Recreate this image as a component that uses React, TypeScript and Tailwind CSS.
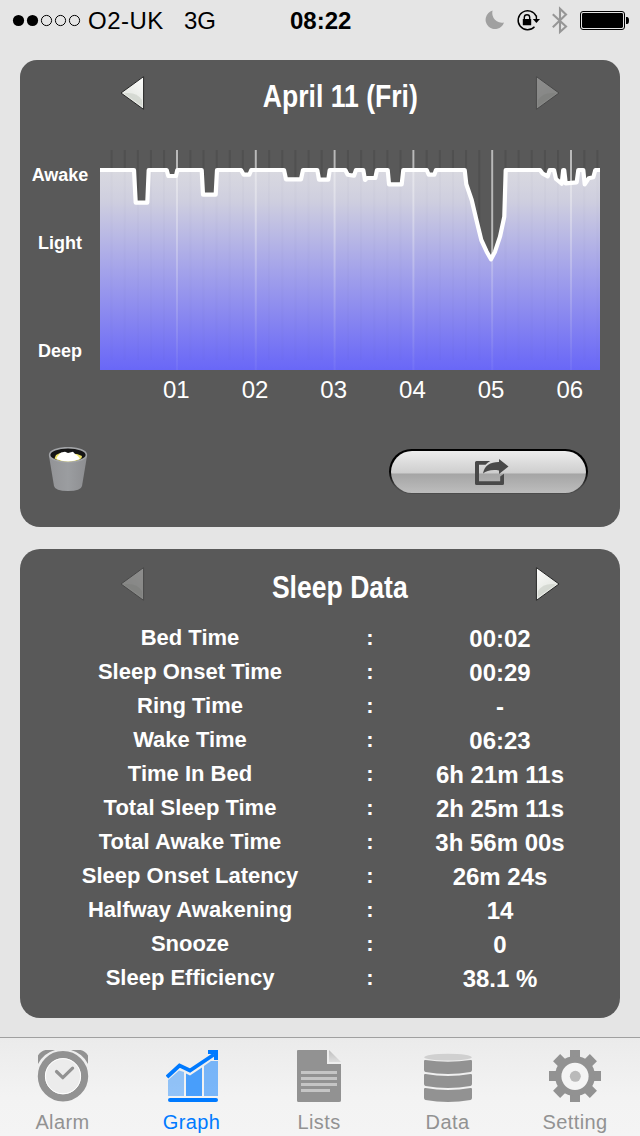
import React from "react";

const rows: [string, string][] = [
  ["Bed Time", "00:02"],
  ["Sleep Onset Time", "00:29"],
  ["Ring Time", "-"],
  ["Wake Time", "06:23"],
  ["Time In Bed", "6h 21m 11s"],
  ["Total Sleep Time", "2h 25m 11s"],
  ["Total Awake Time", "3h 56m 00s"],
  ["Sleep Onset Latency", "26m 24s"],
  ["Halfway Awakening", "14"],
  ["Snooze", "0"],
  ["Sleep Efficiency", "38.1 %"],
];

const hours = ["01", "02", "03", "04", "05", "06"];

const curve =
  "0,20 34,20 35.7,52.7 47.3,52.7 48.7,20 66.7,20 68.3,26 76,26 77.3,20 101.7,20 103,44.7 115.7,44.7 117,20 141,20 143.7,24.7 149.3,24.7 151.3,20 184,20 186,29.3 201,29.3 203,20 217.3,20 219,29.7 228.3,29.7 229.7,20 245.3,20 247.7,24.7 254,25.7 256,20 263.3,20 265,30 267,28 275.3,28 277,20 287.7,20 289,34.3 301.7,34.3 303.3,20 326.7,20 328.7,24.7 334.3,24.7 336,20 364.7,20 366.3,34.3 371.7,50 376,68.3 381.3,90 386.7,101.7 391,109.3 395,101.7 400,86.7 404.3,66.7 405.7,20 440,20 442.7,23.7 447.7,26.3 449.7,20 454,20 456,29 461.7,33.7 463.2,20 464.2,20 465.7,33.3 476.7,32.3 478.3,20 483.3,20 484.7,34.3 488.7,28.3 493.3,27.3 495.3,20 501,20";

function Arrow({ right = false, dim = false }: { right?: boolean; dim?: boolean }) {
  const id = `arrow-${right ? "r" : "l"}-${dim ? "d" : "b"}`;
  return (
    <svg width="26" height="36" viewBox="0 0 26 36" className={right ? "" : "-scale-x-100"}>
      <defs>
        <linearGradient id={id} x1="0" y1="0" x2="0.5" y2="1">
          <stop offset="0" stopColor="#fdfdfc" />
          <stop offset="1" stopColor="#dfe2dc" />
        </linearGradient>
      </defs>
      <g opacity={dim ? 0.32 : 1}>
        <path d="M1.4 1.6 L24 18 L1.4 34.4 Z" fill={`url(#${id})`} stroke="#252525" strokeWidth="1" />
        <path d="M3 25 Q8 17 19 18 L21 18.6 L3 31 Z" fill="#cbd0c8" opacity="0.65" />
      </g>
    </svg>
  );
}

function StatusBar() {
  return (
    <header className="flex h-[40px] items-center text-[24px] leading-none text-black">
      <div className="flex w-[290px] items-center pl-3">
        <svg width="70" height="14" viewBox="0 0 70 14">
          {[0, 1, 2, 3, 4].map((i) => (
            <circle key={i} cx={6.5 + i * 14} cy="7.5" r={i < 2 ? 5.6 : 5.1} fill={i < 2 ? "#000" : "none"} stroke="#000" strokeWidth={i < 2 ? 0 : 1} />
          ))}
        </svg>
        <span className="ml-[6px] w-[96px] pt-[2px] tracking-[0.5px]">O2-UK</span>
        <span className="pt-[2px]">3G</span>
      </div>
      <div className="w-[190px] pt-[2px] font-bold">08:22</div>
      <svg width="160" height="40" viewBox="480 0 160 40">
        <path d="M492.6 10.6 A9.4 9.4 0 1 0 504 22.4 A9.6 9.6 0 0 1 492.6 10.6 Z" fill="#a0a0a0" />
        <path d="M536.2 16.2 A9.5 9.5 0 1 0 534.5 26.8" fill="none" stroke="#000" strokeWidth="1.4" />
        <path d="M536.4 15.5 V20" stroke="#000" strokeWidth="1.4" />
        <path d="M532.8 19 H540 L536.4 23 Z" />
        <rect x="522.8" y="19" width="8.4" height="6.3" rx="0.6" />
        <path d="M524.3 19.5 V17.4 A2.7 2.7 0 0 1 529.7 17.4 V19.5" fill="none" stroke="#000" strokeWidth="1.4" />
        <path d="M552.8 14.2 L566 26.6 L560 32 V8.8 L566 14.6 L552.8 27.2" fill="none" stroke="#969696" strokeWidth="2.1" />
        <rect x="580.5" y="11.5" width="44" height="18" rx="2.5" fill="none" stroke="#000" />
        <rect x="582" y="13" width="41" height="15" rx="1.4" />
        <path d="M626 17 H627 Q629 17 629 20.5 Q629 24 627 24 H626 Z" />
      </svg>
    </header>
  );
}

function CardTitle({ text, leftDim = false, rightDim = false }: { text: string; leftDim?: boolean; rightDim?: boolean }) {
  return (
    <div className="flex items-center justify-between pr-[59px] pl-[99px]">
      <Arrow dim={leftDim} />
      <h2 className="scale-x-[0.83] pt-[6px] text-[32px] leading-[36px] font-bold whitespace-nowrap">{text}</h2>
      <Arrow right dim={rightDim} />
    </div>
  );
}

function SleepChart() {
  return (
    <svg width="500" height="220" viewBox="0 0 500 220" className="block">
      <defs>
        <linearGradient id="sleep" gradientUnits="userSpaceOnUse" x1="0" y1="20" x2="0" y2="220">
          <stop offset="0" stopColor="#d9d9e0" />
          <stop offset="0.15" stopColor="#cfcfdf" />
          <stop offset="0.5" stopColor="#a4a3ea" />
          <stop offset="1" stopColor="#6967f7" />
        </linearGradient>
        <linearGradient id="hour" gradientUnits="userSpaceOnUse" x1="0" y1="20" x2="0" y2="220">
          <stop offset="0" stopColor="#fff" stopOpacity="0.42" />
          <stop offset="1" stopColor="#fff" stopOpacity="0.05" />
        </linearGradient>
        <clipPath id="area">
          <polygon points={`${curve} 500,220 0,220`} />
        </clipPath>
      </defs>
      {Array.from({ length: 38 }, (_, i) => (
        <rect key={i} x={10.6 + i * 13.13} y="0" width="2" height="200" fill="#505050" />
      ))}
      {hours.map((h, i) => (
        <rect key={h} x={76 + i * 78.8} y="0" width="2" height="200" fill="#b9b9b9" />
      ))}
      <polygon points={`${curve} 500,220 0,220`} fill="url(#sleep)" />
      <g clipPath="url(#area)">
        {Array.from({ length: 38 }, (_, i) => (
          <rect key={i} x={10.6 + i * 13.13} y="20" width="2" height="190" fill="#404080" opacity="0.025" />
        ))}
        {hours.map((h, i) => (
          <rect key={h} x={76 + i * 78.8} y="20" width="2" height="200" fill="url(#hour)" />
        ))}
      </g>
      <polyline points={curve} fill="none" stroke="#fff" strokeWidth="4.2" strokeLinejoin="round" />
    </svg>
  );
}

function TrashIcon() {
  return (
    <svg width="40" height="46" viewBox="0 0 40 46">
      <defs>
        <linearGradient id="bin" x1="0" y1="0" x2="1" y2="0">
          <stop offset="0" stopColor="#929396" />
          <stop offset="0.5" stopColor="#9b9da0" />
          <stop offset="1" stopColor="#8d8e91" />
        </linearGradient>
      </defs>
      <path d="M1 9 L6 39 Q7 44 20 44 Q33 44 34 39 L39 9 Z" fill="url(#bin)" />
      <ellipse cx="20" cy="7.9" rx="18.4" ry="7.2" fill="#151515" stroke="#a2a4a7" strokeWidth="1.6" />
      <path d="M6.5 11.5 L8 8 L12 6 L29 7 L34 9 L33.5 11.2 Q29 14.4 20 14.4 Q11 14.4 6.5 11.5 Z" fill="#ede268" />
      <path d="M8.5 12 L9 10 L13 5.5 L17 4.8 L20 6 L25 4.8 L27 7 L30 9 L32 12 Q27 14.4 20 14.4 Q13 14.4 8.5 12 Z" fill="#fff" />
    </svg>
  );
}

function ShareIcon() {
  return (
    <svg width="34" height="26" viewBox="0 0 34 26" fill="#494949">
      <path d="M15.2 2 H1.5 Q0 2 0 3.5 V24.5 Q0 26 1.5 26 H27.5 Q29 26 29 24.5 V14.8 L25.2 17.5 V22.2 H4 V5.8 H10.5 Q12.5 3.5 15.2 2 Z" />
      <path d="M8 14.5 C9.5 6.5 15.5 3 24 3.1 V0 L33.5 7.5 L24 15 V11.4 C17 10.4 11.5 11.5 8 14.5 Z" />
    </svg>
  );
}

function AlarmIcon() {
  return (
    <svg width="52" height="52" viewBox="0 0 52 52" fill="none" stroke="#929292">
      <path d="M1 14 V5.5 Q3.5 1 8.5 0 H18 Q6 3.5 1 14 Z M51 14 V5.5 Q48.5 1 43.5 0 H34 Q46 3.5 51 14 Z" fill="#929292" stroke="none" />
      <circle cx="26" cy="26.2" r="21.6" strokeWidth="7.2" fill="#ececec" />
      <circle cx="26" cy="26.2" r="17.6" strokeWidth="1" stroke="#fff" />
      <path d="M19.5 21.5 L25.8 27.7 L35.6 18.2" strokeWidth="3.2" strokeLinecap="round" strokeLinejoin="round" />
    </svg>
  );
}

function GraphIcon() {
  return (
    <svg width="52" height="52" viewBox="0 0 52 52" fill="#007aff">
      <path d="M2 30 L13 20.5 L18 22 V46 H2 Z" opacity="0.4" />
      <path d="M20 23.5 L24 25.5 L36 17.5 V46 H20 Z" opacity="0.7" />
      <path d="M38 16 L45 11 H52 V46 H38 Z" opacity="0.5" />
      <path d="M1 27 L13.5 15.5 L24 20.5 L48 4.5" fill="none" stroke="#007aff" strokeWidth="3.8" />
      <path d="M42 0 H52 V10 H48 V4 H42 Z" />
      <rect x="2" y="48" width="50" height="4" rx="2" />
    </svg>
  );
}

function ListsIcon() {
  return (
    <svg width="44" height="52" viewBox="0 0 44 52">
      <defs>
        <linearGradient id="fold" x1="0" y1="0" x2="0" y2="1">
          <stop offset="0" stopColor="#bfbfbf" />
          <stop offset="1" stopColor="#dedede" />
        </linearGradient>
      </defs>
      <path d="M1 0 H30 V14 H44 V50.5 Q44 52 42 52 H1.5 Q0 52 0 50.5 V1 Q0 0 1 0 Z" fill="#929292" />
      <path d="M32 0 L44 12 H32 Z" fill="url(#fold)" />
      <path d="M4 22.5 H40 M4 28.5 H40 M4 34.5 H40 M4 40.5 H33" stroke="#c5c5c5" strokeWidth="3" />
    </svg>
  );
}

function DataIcon() {
  return (
    <svg width="48" height="52" viewBox="0 0 48 52" fill="#929292">
      <ellipse cx="24" cy="7.2" rx="23.8" ry="3.4" fill="#d0d0d0" />
      <path d="M0 11 Q0 9.8 1.5 10 Q24 13.5 46.5 10 Q48 9.8 48 11 V20 Q48 21.6 46.5 22 Q24 26 1.5 22 Q0 21.6 0 20 Z" />
      <path d="M0 25 Q0 23.8 1.5 24 Q24 28 46.5 24 Q48 23.8 48 25 V34 Q48 35.6 46.5 36 Q24 40 1.5 36 Q0 35.6 0 34 Z" />
      <path d="M0 39 Q0 37.8 1.5 38 Q24 42 46.5 38 Q48 37.8 48 39 V48 Q48 49.6 46.5 50 Q24 54 1.5 50 Q0 49.6 0 48 Z" />
    </svg>
  );
}

function GearIcon() {
  return (
    <svg width="52" height="52" viewBox="0 0 52 52" fill="#929292">
      {[0, 45, 90, 135].map((a) => (
        <rect key={a} x="21" y="0" width="10" height="52" transform={`rotate(${a} 26 26)`} />
      ))}
      <circle cx="26" cy="26" r="20" />
      <circle cx="26" cy="26.3" r="13.6" fill="#f4f4f4" />
      <circle cx="26.3" cy="26.3" r="5.5" fill="#bababa" />
    </svg>
  );
}

const tabs = [
  { label: "Alarm", icon: <AlarmIcon />, active: false, w: "w-[125px]" },
  { label: "Graph", icon: <GraphIcon />, active: true, w: "w-[133px]" },
  { label: "Lists", icon: <ListsIcon />, active: false, w: "w-[122px]" },
  { label: "Data", icon: <DataIcon />, active: false, w: "w-[135px]" },
  { label: "Setting", icon: <GearIcon />, active: false, w: "w-[120px]" },
];

export default function App() {
  return (
    <div className="flex h-[1136px] w-[640px] flex-col bg-[#e5e5e5] font-['Liberation_Sans',Arial,sans-serif]">
      <StatusBar />
      <main className="flex flex-1 flex-col gap-[22px] px-5 pt-5 text-white">
        <section className="h-[467px] rounded-t-[17px] rounded-b-[20px] bg-[#595959] pt-[12px]">
          <CardTitle text="April 11 (Fri)" rightDim />
          <div className="mt-[36px] flex">
            <div className="flex w-20 flex-col items-center pt-[15px] text-[18px] leading-5 font-bold">
              <span className="h-[68px]">Awake</span>
              <span className="h-[108px]">Light</span>
              <span>Deep</span>
            </div>
            <SleepChart />
          </div>
          <div className="mt-[6px] ml-[117px] flex text-center text-[24px] leading-7">
            {hours.map((h) => (
              <span key={h} className="w-[78.7px]">{h}</span>
            ))}
          </div>
          <div className="mt-[43px] flex items-start justify-between pr-8 pl-7">
            <TrashIcon />
            <button className="mt-[2px] flex h-[45px] w-[199px] items-center justify-center rounded-full bg-linear-to-b from-black from-40% to-[#4c4c4c] to-85% p-[2px] pb-[1px]">
              <span className="flex h-full w-full items-center justify-center rounded-full bg-[linear-gradient(180deg,#ededed_0%,#cecece_52%,#a5a5a5_55%,#bdbdbd_100%)] pl-[7px]">
                <ShareIcon />
              </span>
            </button>
          </div>
        </section>
        <section className="h-[469px] rounded-[20px] bg-[#595959] pt-[14px]">
          <CardTitle text="Sleep Data" leftDim />
          <div className="mt-[16px] text-center text-[22px] leading-[34px] font-bold">
            {rows.map(([label, value]) => (
              <div key={label} className="grid h-[34px] grid-cols-[340px_20px_240px]">
                <span>{label}</span>
                <span>:</span>
                <span className="pt-[1px] text-[24px] leading-[34px]">{value}</span>
              </div>
            ))}
          </div>
        </section>
      </main>
      <nav className="flex h-[99px] border-t border-[#a0a0a0] bg-linear-to-b from-[#ebebeb] via-[#f3f3f3] via-60% to-[#f4f4f4] pt-3">
        {tabs.map((t) => (
          <div key={t.label} className={`flex flex-col items-center ${t.w} ${t.active ? "text-[#007aff]" : "text-[#929292]"}`}>
            {t.icon}
            <span className="mt-[8px] text-[20px] leading-6 tracking-[0.4px]">{t.label}</span>
          </div>
        ))}
      </nav>
    </div>
  );
}
